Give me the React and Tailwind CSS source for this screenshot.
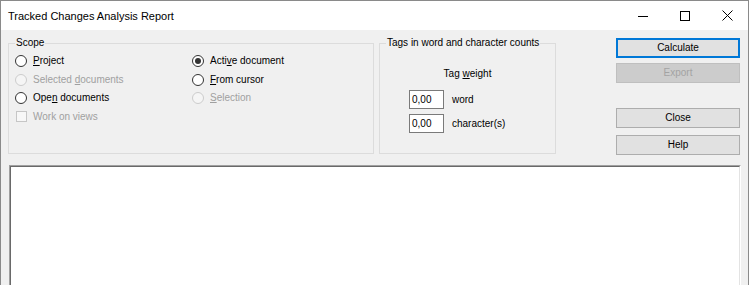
import React from "react";

function Radio({ checked = false, disabled = false, children }) {
  return (
    <div className="flex h-[18.5px] items-center">
      <span
        className={`flex h-[12px] w-[12px] items-center justify-center rounded-full border ${
          disabled ? "border-[#cccccc] bg-[#f5f5f5]" : "border-[#333333] bg-white"
        }`}
      >
        {checked && <span className="h-[6px] w-[6px] rounded-full bg-[#333333]" />}
      </span>
      <span className={`ml-[6px] ${disabled ? "text-[#a0a0a0]" : "text-black"}`}>{children}</span>
    </div>
  );
}

function Button({ children, primary = false, disabled = false, className = "" }) {
  let look = "border border-[#adadad] bg-[#e1e1e1] text-black";
  if (primary) look = "border-2 border-[#0078d7] bg-[#e1e1e1] text-black";
  if (disabled) look = "border border-[#bfbfbf] bg-[#cccccc] text-[#a3a3a3]";
  return (
    <div className={`flex h-[20px] w-[124px] items-center justify-center ${look} ${className}`}>
      {children}
    </div>
  );
}

function WeightInput({ label, className = "" }) {
  return (
    <div className={`flex items-center ${className}`}>
      <div className="flex h-[19px] w-[35px] items-center border border-[#7a7a7a] bg-white px-[2px]">
        0,00
      </div>
      <span className="ml-[8px]">{label}</span>
    </div>
  );
}

export default function App() {
  return (
    <div className="h-[285px] w-[750px] overflow-hidden bg-white font-['Liberation_Sans',Arial,sans-serif] text-[10px] leading-[12px] text-black">
      <div className="w-[749px] border-l border-r border-t border-[#8a8a8a]">
        {/* title bar */}
        <div className="flex h-[29px] items-center bg-white">
          <span className="pl-[7px] text-[11px]">Tracked Changes Analysis Report</span>
          <div className="ml-auto flex h-full">
            <div className="flex w-[42px] items-center justify-center">
              <span className="mt-[1px] h-[1px] w-[10px] bg-black" />
            </div>
            <div className="flex w-[42px] items-center justify-center">
              <span className="h-[10px] w-[10px] border border-black" />
            </div>
            <div className="flex w-[42px] items-center justify-center">
              <svg width="11" height="11" viewBox="0 0 11 11">
                <path d="M0.5 0.5 L10.5 10.5 M10.5 0.5 L0.5 10.5" stroke="#000" strokeWidth="1" />
              </svg>
            </div>
          </div>
        </div>

        {/* body */}
        <div className="bg-[#f0f0f0] pl-[7px] pt-[7px]">
          <div className="flex">
            <fieldset className="h-[117px] w-[366px] border border-[#dcdcdc]">
              <legend className="ml-[6px] px-[1px]">Scope</legend>
              <div className="flex pl-[6px] pt-[3px]">
                <div className="w-[177px]">
                  <Radio>
                    <u>P</u>roject
                  </Radio>
                  <Radio disabled>
                    Selected <u>d</u>ocuments
                  </Radio>
                  <Radio>
                    Ope<u>n</u> documents
                  </Radio>
                  <div className="flex h-[18.5px] items-center">
                    <span className="ml-[1px] h-[11px] w-[11px] border border-[#c6c6c6] bg-[#f7f7f7]" />
                    <span className="ml-[6px] text-[#a0a0a0]">Work on views</span>
                  </div>
                </div>
                <div>
                  <Radio checked>
                    Acti<u>v</u>e document
                  </Radio>
                  <Radio>
                    <u>F</u>rom cursor
                  </Radio>
                  <Radio disabled>
                    <u>S</u>election
                  </Radio>
                </div>
              </div>
            </fieldset>

            <fieldset className="ml-[5px] h-[117px] w-[177px] border border-[#dcdcdc]">
              <legend className="ml-[6px] px-[1px]">Tags in word and character counts</legend>
              <div className="mt-[19px] text-center">
                Tag <u>w</u>eight
              </div>
              <WeightInput label="word" className="ml-[29px] mt-[10px]" />
              <WeightInput label="character(s)" className="ml-[29px] mt-[5px]" />
            </fieldset>

            <div className="ml-[60px] flex flex-col pt-[1px]">
              <Button primary>Calculate</Button>
              <Button disabled className="mt-[5px]">
                Export
              </Button>
              <Button className="mt-[25px]">Close</Button>
              <Button className="mt-[7px]">Help</Button>
            </div>
          </div>

          {/* results area */}
          <div className="ml-[1px] mt-[10px] h-[130px] w-[732px] border-l border-r border-t border-l-[#a0a0a0] border-r-white border-t-[#a0a0a0]">
            <div className="h-full w-full border-l border-r border-t border-l-[#696969] border-r-[#e3e3e3] border-t-[#696969] bg-white" />
          </div>
        </div>
      </div>
    </div>
  );
}
